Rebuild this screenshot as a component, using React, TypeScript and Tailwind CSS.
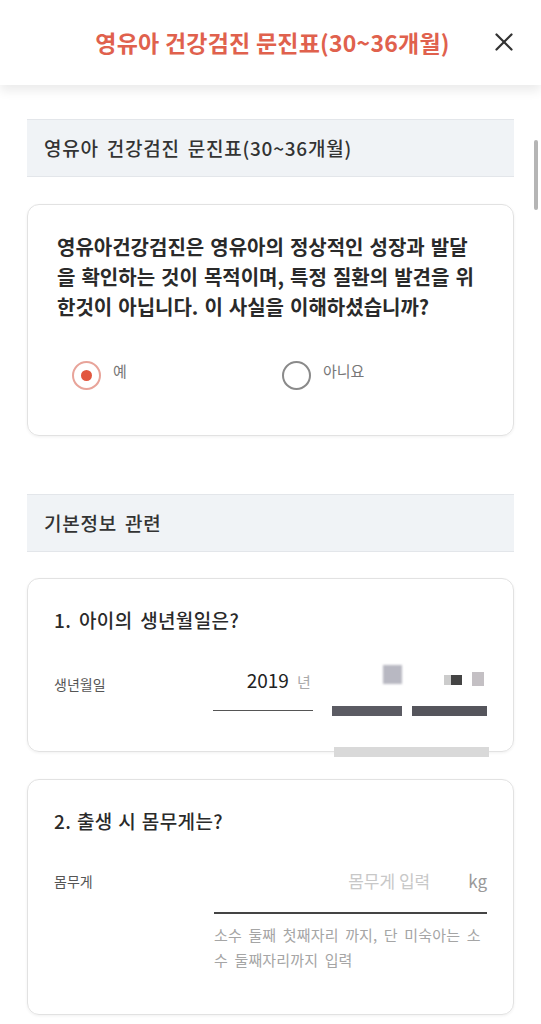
import { X } from "lucide-react";

const font = { fontFamily: '"Noto Sans CJK KR", "Noto Sans", sans-serif' };

function SectionHeader({ title }: { title: string }) {
  return (
    <div className="mx-[27px] h-[58px] bg-[#f0f3f6] border-t border-b border-[#e3e6ea] flex items-center px-[17px]">
      <span className="text-[19px] font-medium text-[#333] tracking-[0.04em] [word-spacing:3px]">{title}</span>
    </div>
  );
}

function Radio({ checked, label }: { checked: boolean; label: string }) {
  return (
    <div className="flex items-center gap-3">
      <div
        className={`w-[29px] h-[29px] rounded-full border-2 flex items-center justify-center ${
          checked ? "border-[#e8a49a]" : "border-[#8a8a8a]"
        }`}
      >
        {checked && <div className="w-[11px] h-[11px] rounded-full bg-[#e2573f]" />}
      </div>
      <span className="text-[15px] text-[#777] -mt-2">{label}</span>
    </div>
  );
}

export default function App() {
  return (
    <div className="w-[541px] h-[1024px] bg-white overflow-hidden relative" style={font}>
      {/* Header */}
      <header className="h-[85px] flex items-center justify-center relative shadow-[0_6px_10px_rgba(0,0,0,0.08)] bg-white z-10">
        <h1 className="text-[23px] font-bold text-[#e0614d] tracking-[0.01em] mr-[-4px]">
          영유아 건강검진 문진표(30~36개월)
        </h1>
        <X className="absolute right-[22px] top-[27px] text-[#333]" size={30} strokeWidth={1.8} />
      </header>

      {/* Scrollbar */}
      <div className="absolute right-[3px] top-[140px] w-[4px] h-[70px] rounded bg-[#b5b5b5]" />

      <div className="pt-[34px]">
        <SectionHeader title="영유아 건강검진 문진표(30~36개월)" />

        <div className="mx-[27px] mt-[27px] h-[232px] border border-[#e2e2e2] rounded-[12px] shadow-[0_1px_3px_rgba(0,0,0,0.06)] pl-[29px] pr-[10px] pt-[27px]">
          <p className="text-[20px] font-semibold leading-[30px] text-[#2a2a2a] [word-spacing:1.5px] whitespace-nowrap">
            영유아건강검진은 영유아의 정상적인 성장과 발달
            <br />을 확인하는 것이 목적이며, 특정 질환의 발견을 위
            <br />한것이 아닙니다. 이 사실을 이해하셨습니까?
          </p>
          <div className="flex mt-[39px] pl-[15px]">
            <div className="w-[210px]">
              <Radio checked label="예" />
            </div>
            <Radio checked={false} label="아니요" />
          </div>
        </div>

        <div className="mt-[58px]">
          <SectionHeader title="기본정보 관련" />
        </div>

        {/* Q1 */}
        <div className="mx-[27px] mt-[26px] h-[174px] border border-[#e2e2e2] rounded-[12px] shadow-[0_1px_3px_rgba(0,0,0,0.06)] px-[26px] pt-[27px] relative">
          <p className="text-[19px] font-medium text-[#2a2a2a] tracking-[0.02em] [word-spacing:3px]">1. 아이의 생년월일은?</p>
          <div className="flex h-[46px] mt-[30px]">
            <span className="text-[14px] text-[#555] w-[160px] pt-[9px]">생년월일</span>
            <div className="w-[100px] border-b border-[#555] pb-[21px] flex justify-end items-end gap-2 pr-[2px]">
              <span className="text-[19px] text-[#222] leading-none">2019</span>
              <span className="text-[15px] text-[#aaa] leading-none">년</span>
            </div>
            <div className="w-[70px] ml-[19px] relative">
              <div className="absolute left-[51px] top-0 w-[19px] h-[19px] bg-[#b8b8c2] blur-[1px]" />
              <div className="absolute left-0 bottom-[-5px] w-[70px] h-[10px] bg-[#5b5b63] blur-[0.5px]" />
            </div>
            <div className="w-[75px] ml-[11px] relative">
              <div className="absolute left-[32px] top-[10px] w-[7px] h-[10px] bg-[#ccc]" />
              <div className="absolute left-[39px] top-[10px] w-[11px] h-[10px] bg-[#444] blur-[0.5px]" />
              <div className="absolute left-[60px] top-[7px] w-[12px] h-[14px] bg-[#c4c0c4] blur-[0.5px]" />
              <div className="absolute left-0 bottom-[-5px] w-[75px] h-[10px] bg-[#55555c] blur-[0.5px]" />
            </div>
          </div>
          <div className="absolute left-[306px] bottom-[-6px] w-[155px] h-[10px] bg-[#d9d9d9]" />
        </div>

        {/* Q2 */}
        <div className="mx-[27px] mt-[27px] h-[236px] border border-[#e2e2e2] rounded-[12px] shadow-[0_1px_3px_rgba(0,0,0,0.06)] px-[26px] pt-[27px]">
          <p className="text-[19px] font-medium text-[#2a2a2a] tracking-[0.02em] [word-spacing:1px]">2. 출생 시 몸무게는?</p>
          <div className="flex mt-[32px]">
            <span className="text-[14px] text-[#555] w-[160px] shrink-0 pt-[3px]">몸무게</span>
            <div className="flex-1 min-w-0">
              <div className="border-b-2 border-[#444] pb-[19px] flex justify-end items-center gap-[38px]">
                <span className="text-[17px] text-[#c8c8c8]">몸무게 입력</span>
                <span className="text-[17px] text-[#999]">kg</span>
              </div>
              <p className="text-[15px] leading-[25px] text-[#a5a5a5] mt-[8px] whitespace-nowrap tracking-[0.01em] [word-spacing:3px]">
                소수 둘째 첫째자리 까지, 단 미숙아는 소
                <br />수 둘째자리까지 입력
              </p>
            </div>
          </div>
        </div>
      </div>
    </div>
  );
}
